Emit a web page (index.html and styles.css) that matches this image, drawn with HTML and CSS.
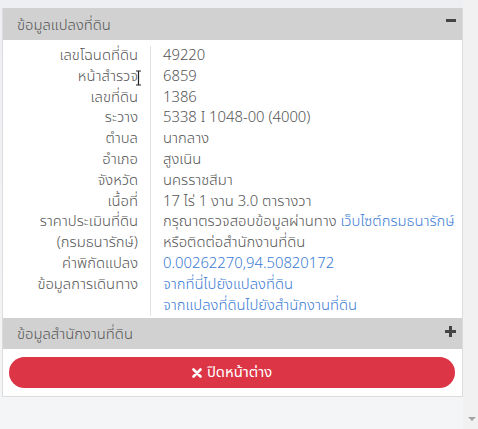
FILE: index.html
```html
<!DOCTYPE html>
<html lang="th">
  <head>
    <meta charset="UTF-8" />
    <meta name="viewport" content="width=device-width, initial-scale=1.0" />
    <title>ข้อมูลแปลงที่ดิน</title>
    <link rel="stylesheet" href="styles.css">
  </head>
  <body>
    <div class="page">
      <div class="main">
        <div class="panel">
          <div class="panel-head">
            <span>ข้อมูลแปลงที่ดิน</span>
            <span class="icon-minus"></span>
          </div>
          <div class="info">
            <div class="label">เลขโฉนดที่ดิน</div><div class="value">49220</div>
            <div class="label cursor-host">หน้าสำรวจ<svg class="ibeam" width="7" height="16" viewBox="0 0 7 16"><path d="M1 1 H6 M3.5 1 V15 M1 15 H6" stroke="#222" stroke-width="1.2" fill="none" /></svg></div><div class="value">6859</div>
            <div class="label">เลขที่ดิน</div><div class="value">1386</div>
            <div class="label">ระวาง</div><div class="value">5338 I 1048-00 (4000)</div>
            <div class="label">ตำบล</div><div class="value">นากลาง</div>
            <div class="label">อำเภอ</div><div class="value">สูงเนิน</div>
            <div class="label">จังหวัด</div><div class="value">นครราชสีมา</div>
            <div class="label">เนื้อที่</div><div class="value">17 ไร่ 1 งาน 3.0 ตารางวา</div>
            <div class="label">ราคาประเมินที่ดิน</div><div class="value">กรุณาตรวจสอบข้อมูลผ่านทาง <a href="#">เว็บไซต์กรมธนารักษ์</a></div>
            <div class="label">(กรมธนารักษ์)</div><div class="value">หรือติดต่อสำนักงานที่ดิน</div>
            <div class="label">ค่าพิกัดแปลง</div><div class="value"><a href="#">0.00262270,94.50820172</a></div>
            <div class="label">ข้อมูลการเดินทาง</div>
            <div class="value">
              <a href="#">จากที่นี่ไปยังแปลงที่ดิน</a><br />
              <a href="#">จากแปลงที่ดินไปยังสำนักงานที่ดิน</a>
            </div>
          </div>
          <div class="panel-head">
            <span>ข้อมูลสำนักงานที่ดิน</span>
            <svg class="icon-plus" width="11" height="11" viewBox="0 0 11 11">
              <rect x="4" y="0" width="3" height="11" fill="#444" />
              <rect x="0" y="4" width="11" height="3" fill="#444" />
            </svg>
          </div>
          <div class="actions">
            <button class="btn-close">
              <svg width="10" height="10" viewBox="0 0 10 10">
                <path d="M1.5 1.5 L8.5 8.5 M8.5 1.5 L1.5 8.5" stroke="#fff" stroke-width="2.6" stroke-linecap="round" />
              </svg>
              ปิดหน้าต่าง
            </button>
          </div>
        </div>
      </div>
      <div class="scrollbar"><span class="arrow"></span></div>
    </div>
  </body>
</html>
```

FILE: styles.css
```css
body {
  margin: 0;
  background-color: #f3f4f6;
  font-family: "Noto Sans Thai", "Noto Sans Thai Looped", "Noto Sans", sans-serif;
  font-size: 14.8px;
  font-weight: 300;
  color: #555;
}
.page {
  display: flex;
  height: 429px;
}
.main {
  flex: 1;
  padding: 8px 0 0 2px;
  background: linear-gradient(#edeff2, #f4f5f7);
}
.panel {
  background-color: white;
  border: 1px solid #dcdcdc;
  border-top: none;
}
.panel-head {
  display: flex;
  align-items: center;
  justify-content: space-between;
  height: 32px;
  padding: 2px 6px 0 14px;
  box-sizing: border-box;
  background-color: #d1d1d1;
  color: #555;
}
.panel-head + .info + .panel-head {
  height: 31px;
}
.icon-minus {
  display: block;
  width: 10px;
  height: 3px;
  background-color: #444;
  margin-top: -10px;
}
.icon-plus {
  margin-top: -6px;
}
.info {
  display: grid;
  grid-template-columns: 148px 1fr;
  line-height: 20.8px;
  padding: 6px 0 2px;
}
.info .label {
  text-align: right;
  padding-right: 12px;
  border-right: 1px solid #e2e2e2;
}
.info .value {
  padding-left: 12px;
  white-space: nowrap;
}
.info a {
  color: #3a7bd5;
  text-decoration: none;
}
.cursor-host {
  position: relative;
}
.ibeam {
  position: absolute;
  right: 8px;
  top: 3px;
}
.actions {
  padding: 8px 7px 8px 6px;
}
.btn-close {
  display: flex;
  align-items: center;
  justify-content: center;
  gap: 5px;
  width: 100%;
  height: 31px;
  border: none;
  border-radius: 16px;
  background-color: #dc3545;
  color: white;
  font-family: inherit;
  font-size: 14.8px;
  font-weight: 400;
  cursor: pointer;
}
.scrollbar {
  width: 15px;
  background-color: #f1f1f1;
  position: relative;
}
.scrollbar .arrow {
  position: absolute;
  left: 5px;
  bottom: 8px;
  border-left: 4px solid transparent;
  border-right: 4px solid transparent;
  border-top: 4px solid #a3a3a3;
}
```
